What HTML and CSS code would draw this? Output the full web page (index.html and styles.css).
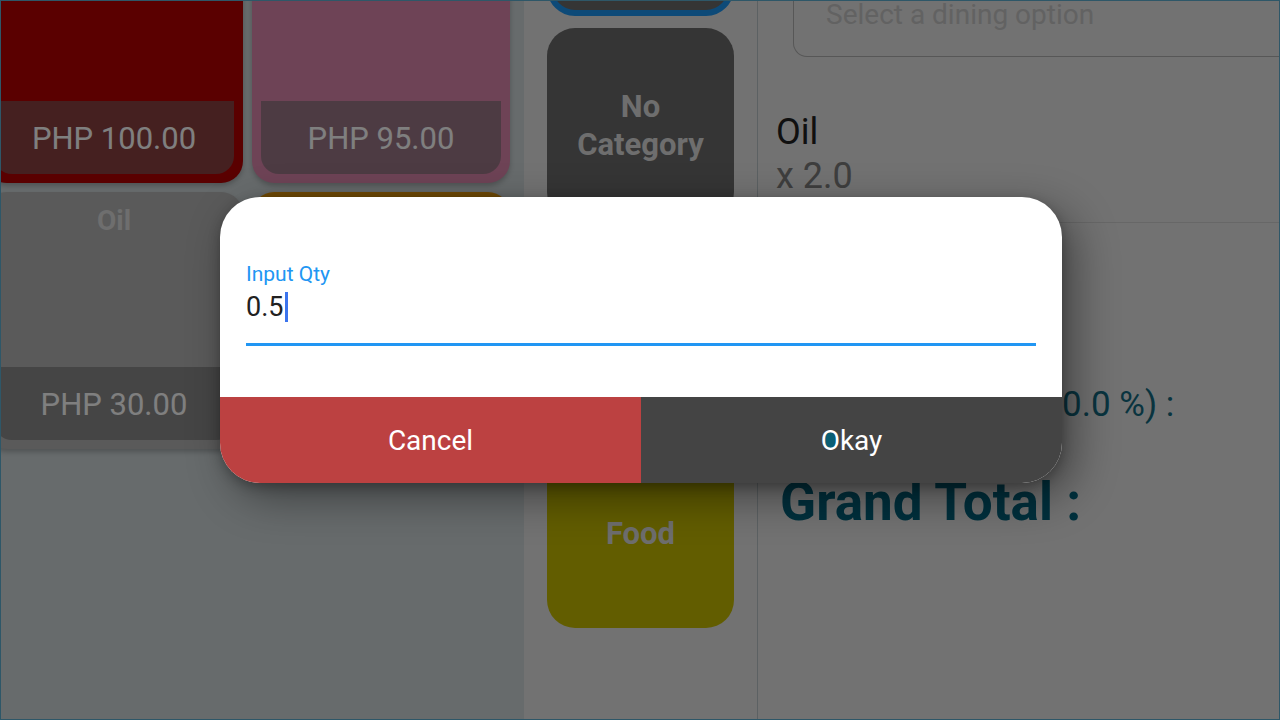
FILE: index.html
```html
<!DOCTYPE html>
<html lang="en">
<head>
<meta charset="utf-8">
<title>POS - Input Qty</title>
<link rel="stylesheet" href="styles.css">
</head>
<body>
<div class="app">
  <section class="products">
    <div class="product-grid">
      <div class="card card-red">
        <div class="card-title"></div>
        <div class="card-price">PHP 100.00</div>
      </div>
      <div class="card card-pink">
        <div class="card-title"></div>
        <div class="card-price">PHP 95.00</div>
      </div>
      <div class="card card-grey">
        <div class="card-title">Oil</div>
        <div class="card-price">PHP 30.00</div>
      </div>
      <div class="card card-orange">
        <div class="card-title"></div>
        <div class="card-price">PHP 0.00</div>
      </div>
    </div>
  </section>

  <nav class="categories">
    <div class="cat cat-selected"></div>
    <div class="cat cat-dark">No Category</div>
    <div class="cat cat-dark">Drinks</div>
    <div class="cat cat-yellow">Food</div>
  </nav>

  <aside class="order">
    <div class="dining-select">Select a dining option</div>
    <div class="order-item">
      <div class="item-name">Oil</div>
      <div class="item-qty">x 2.0</div>
    </div>
    <div class="summary">
      <div class="sum-line sub">Subtotal :</div>
      <div class="sum-line charge">Service Charge (0.0 %) :</div>
      <div class="grand">Grand Total :</div>
    </div>
  </aside>

  <div class="scrim">
    <div class="dialog">
      <div class="dialog-body">
        <label class="field-label">Input Qty</label>
        <div class="field-value">0.5<span class="caret"></span></div>
        <div class="field-line"></div>
      </div>
      <div class="dialog-actions">
        <button class="btn btn-cancel">Cancel</button>
        <button class="btn btn-okay"><span class="tap">O</span>kay</button>
      </div>
    </div>
  </div>
</div>
</body>
</html>
```

FILE: styles.css
```css
* { box-sizing: border-box; }

html, body {
  margin: 0;
  padding: 0;
  width: 1280px;
  height: 720px;
  overflow: hidden;
  font-family: Roboto, "Noto Sans", "Liberation Sans", sans-serif;
}

.app {
  position: relative;
  width: 1280px;
  height: 720px;
  border: 1px solid #2e5768;
  display: grid;
  grid-template-columns: 523px 233px 1fr;
  overflow: hidden;
  background: #e4e4e4;
}

/* ---------- products ---------- */
.products {
  background: #ced6d8;
  overflow: hidden;
}

.product-grid {
  margin: -75px 0 0 -16px;
  display: grid;
  grid-template-columns: 258px 258px;
  grid-auto-rows: 257px;
  gap: 9px;
}

.card {
  border-radius: 22px;
  padding: 9px;
  display: flex;
  flex-direction: column;
  justify-content: space-between;
  box-shadow: 0 3px 5px rgba(0, 0, 0, 0.22);
}

.card-red { background: #b40000; }
.card-pink { background: #dc86ac; }
.card-grey { background: #b4b4b4; }
.card-orange { background: #e0950c; }

.card-title {
  height: 40px;
  line-height: 40px;
  text-align: center;
  font-size: 28px;
  font-weight: 700;
  color: #dcdcdc;
}

.card-price {
  height: 73px;
  line-height: 75px;
  text-align: center;
  font-size: 31px;
  color: #ffffff;
  background: rgba(108, 108, 108, 0.59);
  border-radius: 0 0 18px 18px;
}

/* ---------- categories ---------- */
.categories {
  background: #e4e4e4;
  display: flex;
  flex-direction: column;
  align-items: center;
  gap: 12px;
  margin-top: -177px;
}

.cat {
  flex: 0 0 192px;
  width: 187px;
  border-radius: 28px;
  display: flex;
  align-items: center;
  justify-content: center;
  text-align: center;
  font-size: 31px;
  font-weight: 700;
  line-height: 38px;
  color: #dcdcdc;
  padding: 4px 26px 0;
}

.cat-selected {
  background: #6a6a6a;
  border: 6px solid #1a94f0;
}

.cat-dark { background: #6a6a6a; }
.cat-yellow { background: #c4ba00; }

/* ---------- order ---------- */
.order {
  border-left: 1px solid #b8c2c6;
  background: #e4e4e4;
  display: flex;
  flex-direction: column;
  overflow: hidden;
}

.dining-select {
  margin: 0 0 0 35px;
  height: 56px;
  border: 1px solid #aeaeae;
  border-top: 0;
  border-right: 0;
  border-radius: 0 0 0 14px;
  padding: 0 0 0 32px;
  font-size: 28px;
  line-height: 27px;
  color: #c4c4c4;
}

.order-item {
  margin-top: 53px;
  padding-left: 18px;
  padding-bottom: 24px;
  border-bottom: 1px solid #cecece;
}

.item-name {
  font-size: 36px;
  line-height: 44px;
  color: #202020;
}

.item-qty {
  font-size: 36px;
  line-height: 44px;
  color: #7c7c7c;
}

.summary {
  padding-left: 22px;
  display: flex;
  flex-direction: column;
}

.sum-line {
  font-size: 35px;
  line-height: 40px;
  color: #12687f;
  white-space: nowrap;
}

.sum-line.sub {
  margin-top: 79px;
  margin-bottom: 43px;
}

.sum-line.charge {
  padding-left: 28px;
}

.grand {
  margin-top: 47px;
  font-size: 53px;
  font-weight: 700;
  line-height: 60px;
  color: #00607a;
}

/* ---------- dialog ---------- */
.scrim {
  position: absolute;
  inset: 0;
  background: rgba(0, 0, 0, 0.5);
  display: flex;
  align-items: flex-start;
  padding: 196px 0 0 219px;
}

.dialog {
  width: 842px;
  height: 286px;
  background: #ffffff;
  border-radius: 40px;
  overflow: hidden;
  display: flex;
  flex-direction: column;
  box-shadow: 12px 14px 44px rgba(0, 0, 0, 0.42), 0 4px 12px rgba(0, 0, 0, 0.25);
}

.dialog-body {
  flex: 1;
  padding: 64px 26px 0 26px;
  display: flex;
  flex-direction: column;
}

.field-label {
  font-size: 21px;
  line-height: 26px;
  color: #2196f3;
}

.field-value {
  margin-top: 5px;
  font-size: 27px;
  line-height: 30px;
  color: #212121;
  display: flex;
  align-items: center;
}

.caret {
  display: inline-block;
  width: 3px;
  height: 30px;
  margin-left: 2px;
  background: #3b74ee;
}

.field-line {
  margin-top: 21px;
  height: 3px;
  background: #2196f3;
}

.dialog-actions {
  height: 86px;
  display: grid;
  grid-template-columns: 1fr 1fr;
}

.btn {
  border: 0;
  margin: 0;
  font-family: inherit;
  font-size: 28px;
  color: #ffffff;
  cursor: pointer;
}

.btn-cancel { background: #bc4141; }
.btn-okay { background: #444444; position: relative; z-index: 0; }

.tap {
  position: relative;
  display: inline-block;
}

.tap::before {
  content: "";
  position: absolute;
  left: 50%;
  top: 52%;
  width: 13px;
  height: 17px;
  transform: translate(-50%, -50%);
  border-radius: 50%;
  background: #0a5e74;
  z-index: -1;
}
```
